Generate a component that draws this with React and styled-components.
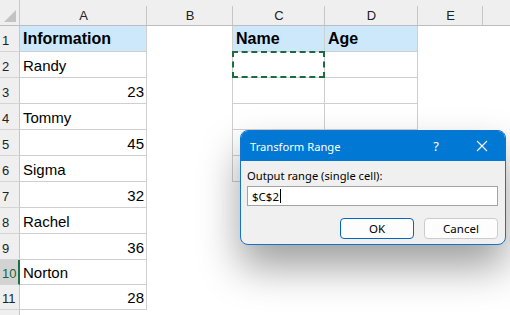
import React from "react";
import styled, { createGlobalStyle } from "styled-components";

const GlobalStyle = createGlobalStyle`
  html, body {
    margin: 0;
    padding: 0;
    background: #ffffff;
    overflow: hidden;
  }
  #root {
    width: 510px;
    height: 315px;
    overflow: hidden;
  }
`;

const COLS = [
  { key: "", w: "20px" },
  { key: "A", w: "127px" },
  { key: "B", w: "86px" },
  { key: "C", w: "92px" },
  { key: "D", w: "93px" },
  { key: "E", w: "65px" },
  { key: "F", w: "1fr" },
];

const ROW_H = [26, 26, 26, 26, 26, 26, 26, 26, 26, 25, 25, 26];

const data = [
  { A: "Information", C: "Name", D: "Age", head: true },
  { A: "Randy" },
  { A: 23 },
  { A: "Tommy" },
  { A: 45 },
  { A: "Sigma" },
  { A: 32 },
  { A: "Rachel" },
  { A: 36 },
  { A: "Norton", active: true },
  { A: 28 },
  { hidden: true },
];

const App = () => {
  return (
    <>
      <GlobalStyle />
      <Page>
        <Sheet
          style={{
            gridTemplateColumns: COLS.map((c) => c.w).join(" "),
            gridTemplateRows: "26px " + ROW_H.map((h) => h + "px").join(" "),
          }}
        >
          <Corner>
            <svg width="12" height="12" viewBox="0 0 12 12">
              <polygon points="12,0 12,12 0,12" fill="#c3c3c3" />
            </svg>
          </Corner>
          {COLS.slice(1).map((c) => (
            <ColHead key={c.key} $last={c.key === "F"}>
              {c.key === "F" ? "" : c.key}
            </ColHead>
          ))}
          {data.map((row, i) => {
            const r = i + 1;
            const inTable = r <= 6;
            return (
              <React.Fragment key={r}>
                <RowHead $active={row.active}>{row.hidden ? "" : r}</RowHead>
                <Cell
                  $grid={r <= 11}
                  $head={row.head}
                  $num={typeof row.A === "number"}
                >
                  {row.A}
                </Cell>
                <Cell $right={inTable} />
                <Cell $grid={inTable} $head={row.head}>
                  {row.C}
                  {r === 2 && <Ants />}
                </Cell>
                <Cell $grid={inTable} $head={row.head}>
                  {row.D}
                </Cell>
                <Cell />
                <Cell />
              </React.Fragment>
            );
          })}
        </Sheet>

        <Dialog>
          <TitleBar>
            <Title>Transform Range</Title>
            <TitleBtn>?</TitleBtn>
            <TitleBtn>
              <svg width="12" height="12" viewBox="0 0 12 12">
                <path
                  d="M1 1 L11 11 M11 1 L1 11"
                  stroke="#ffffff"
                  strokeWidth="1.1"
                  fill="none"
                />
              </svg>
            </TitleBtn>
          </TitleBar>
          <Body>
            <Label>Output range (single cell):</Label>
            <Input>
              $C$2<Caret />
            </Input>
            <Buttons>
              <Button $primary>OK</Button>
              <Button>Cancel</Button>
            </Buttons>
          </Body>
        </Dialog>
      </Page>
    </>
  );
};

export default App;

const Page = styled.div`
  position: relative;
  width: 510px;
  height: 315px;
  overflow: hidden;
  background: #ffffff;
`;

const Sheet = styled.div`
  display: grid;
  width: 510px;
  font-family: "Liberation Sans", Arial, sans-serif;
`;

const Corner = styled.div`
  background: #efefef;
  border-right: 1px solid #c9c9c9;
  border-bottom: 1px solid #bdbdbd;
  display: flex;
  align-items: flex-end;
  justify-content: flex-end;
  padding: 0 3px 3px 0;
  box-sizing: border-box;
`;

const ColHead = styled.div`
  box-sizing: border-box;
  background: ${({ $last }) =>
    $last
      ? "#efefef"
      : "linear-gradient(#c6c6c6, #c6c6c6) right 6px / 1px 100% no-repeat, #efefef"};
  border-bottom: 1px solid #bdbdbd;
  display: flex;
  align-items: center;
  justify-content: center;
  padding-top: 6px;
  font-size: 13px;
  color: #222222;
`;

const RowHead = styled.div`
  box-sizing: border-box;
  background: ${({ $active }) => ($active ? "#d3d3d3" : "#efefef")};
  border-right: ${({ $active }) =>
    $active ? "2px solid #1e7145" : "1px solid #c6c6c6"};
  border-bottom: 1px solid #d4d4d4;
  display: flex;
  align-items: flex-end;
  padding: 0 0 3px 2px;
  font-size: 13px;
  color: ${({ $active }) => ($active ? "#16653c" : "#222222")};
`;

const Cell = styled.div`
  position: relative;
  box-sizing: border-box;
  background: ${({ $head }) => ($head ? "#cde8fb" : "#ffffff")};
  border-right: ${({ $grid, $right }) =>
    $grid || $right ? "1px solid #cfcfcf" : "none"};
  border-bottom: ${({ $grid }) => ($grid ? "1px solid #cfcfcf" : "none")};
  display: flex;
  align-items: flex-end;
  justify-content: ${({ $num }) => ($num ? "flex-end" : "flex-start")};
  padding: 0 2px 3px 3px;
  font-size: ${({ $head }) => ($head ? "16px" : "15px")};
  font-weight: ${({ $head }) => ($head ? "bold" : "normal")};
  color: #000000;
  white-space: nowrap;
`;

const Ants = styled.div`
  position: absolute;
  left: -1px;
  top: -1px;
  right: -1px;
  bottom: -1px;
  border: 2px dashed #1e6b41;
`;

const Dialog = styled.div`
  position: absolute;
  left: 240px;
  top: 130px;
  width: 266px;
  height: 115px;
  box-sizing: border-box;
  border: 1px solid #1473cf;
  border-radius: 8px;
  background: #f0f0f0;
  overflow: hidden;
  box-shadow: 0 22px 40px rgba(0, 0, 0, 0.38);
  font-family: "Noto Sans", "Open Sans", sans-serif;
  display: flex;
  flex-direction: column;
`;

const TitleBar = styled.div`
  height: 30px;
  background: #0078d4;
  display: flex;
  align-items: center;
  padding-left: 9px;
  color: #ffffff;
`;

const Title = styled.div`
  flex: 1;
  font-size: 11.2px;
`;

const TitleBtn = styled.div`
  width: 46px;
  height: 30px;
  display: flex;
  align-items: center;
  justify-content: center;
  font-size: 13px;
`;

const Body = styled.div`
  display: flex;
  flex-direction: column;
  padding: 7px 7px 0 6px;
`;

const Label = styled.div`
  font-size: 11.2px;
  color: #000000;
  line-height: 16px;
`;

const Input = styled.div`
  margin-top: 2px;
  height: 20px;
  box-sizing: border-box;
  border: 1px solid #a3a3a3;
  background: #ffffff;
  display: flex;
  align-items: center;
  padding-left: 4px;
  font-size: 11.5px;
  color: #000000;
`;

const Caret = styled.span`
  display: inline-block;
  width: 1px;
  height: 14px;
  background: #000000;
  margin-left: 1px;
`;

const Buttons = styled.div`
  display: flex;
  justify-content: flex-end;
  gap: 10px;
  margin-top: 12px;
`;

const Button = styled.div`
  width: 74px;
  height: 21px;
  box-sizing: border-box;
  border: 1px solid ${({ $primary }) => ($primary ? "#0067c0" : "#cccccc")};
  border-radius: 4px;
  background: #fdfdfd;
  display: flex;
  align-items: center;
  justify-content: center;
  font-size: 11.5px;
  color: #000000;
`;
